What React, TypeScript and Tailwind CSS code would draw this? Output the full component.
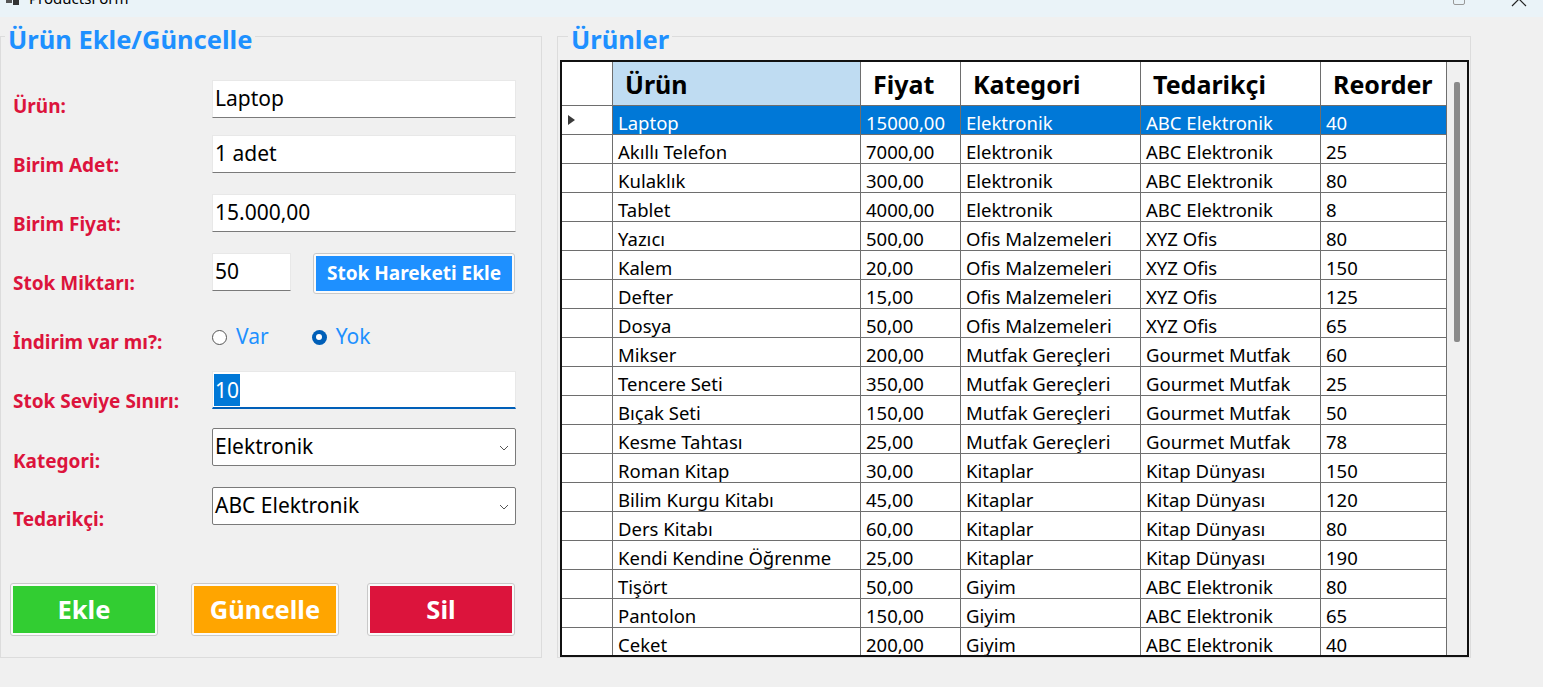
import type { ReactNode } from 'react';

const products = [
  ['Laptop', '15000,00', 'Elektronik', 'ABC Elektronik', '40'],
  ['Akıllı Telefon', '7000,00', 'Elektronik', 'ABC Elektronik', '25'],
  ['Kulaklık', '300,00', 'Elektronik', 'ABC Elektronik', '80'],
  ['Tablet', '4000,00', 'Elektronik', 'ABC Elektronik', '8'],
  ['Yazıcı', '500,00', 'Ofis Malzemeleri', 'XYZ Ofis', '80'],
  ['Kalem', '20,00', 'Ofis Malzemeleri', 'XYZ Ofis', '150'],
  ['Defter', '15,00', 'Ofis Malzemeleri', 'XYZ Ofis', '125'],
  ['Dosya', '50,00', 'Ofis Malzemeleri', 'XYZ Ofis', '65'],
  ['Mikser', '200,00', 'Mutfak Gereçleri', 'Gourmet Mutfak', '60'],
  ['Tencere Seti', '350,00', 'Mutfak Gereçleri', 'Gourmet Mutfak', '25'],
  ['Bıçak Seti', '150,00', 'Mutfak Gereçleri', 'Gourmet Mutfak', '50'],
  ['Kesme Tahtası', '25,00', 'Mutfak Gereçleri', 'Gourmet Mutfak', '78'],
  ['Roman Kitap', '30,00', 'Kitaplar', 'Kitap Dünyası', '150'],
  ['Bilim Kurgu Kitabı', '45,00', 'Kitaplar', 'Kitap Dünyası', '120'],
  ['Ders Kitabı', '60,00', 'Kitaplar', 'Kitap Dünyası', '80'],
  ['Kendi Kendine Öğrenme', '25,00', 'Kitaplar', 'Kitap Dünyası', '190'],
  ['Tişört', '50,00', 'Giyim', 'ABC Elektronik', '80'],
  ['Pantolon', '150,00', 'Giyim', 'ABC Elektronik', '65'],
  ['Ceket', '200,00', 'Giyim', 'ABC Elektronik', '40'],
];

const headers = ['Ürün', 'Fiyat', 'Kategori', 'Tedarikçi', 'Reorder'];
const colWidths = ['w-[248px]', 'w-[100px]', 'w-[180px]', 'w-[180px]', 'w-[126px]'];

function Row({ h, lt, label, children }: { h: string; lt: string; label: string; children: ReactNode }) {
  return (
    <div className={`flex shrink-0 ${h}`}>
      <div className={`w-[199px] ${lt} text-[19px] leading-[22px] font-bold text-[#dc143c] whitespace-nowrap`}>{label}</div>
      {children}
    </div>
  );
}

function TextBox({ value, w = 'w-[304px]' }: { value: string; w?: string }) {
  return (
    <div className={`${w} h-[38px] bg-white border border-[#e8e8e8] border-b-[#7a7a7a] flex items-center pl-[2px] text-[21px] text-black`}>
      {value}
    </div>
  );
}

function Combo({ value }: { value: string }) {
  return (
    <div className="w-[304px] h-[38px] bg-white border border-[#7a7a7a] rounded-[2px] flex items-center justify-between pl-[2px] pr-[6px] text-[21px] text-black">
      <span>{value}</span>
      <svg width="10" height="6" viewBox="0 0 10 6" className="mt-[2px]">
        <polyline points="1,1 5,5 9,1" fill="none" stroke="#555" strokeWidth="1" />
      </svg>
    </div>
  );
}

function ColorButton({ text, bg, size }: { text: string; bg: string; size: string }) {
  return (
    <div className="h-full border border-[#c9c9c9] rounded-[3px] bg-[#fafafa] p-[2px]">
      <div className={`h-full w-full ${bg} flex items-center justify-center text-white font-bold ${size}`}>{text}</div>
    </div>
  );
}

export default function App() {
  return (
    <div className="w-[1543px] h-[687px] bg-[#f0f0f0] overflow-hidden flex flex-col font-['Noto_Sans',sans-serif]">
      {/* Title bar (cut off at top) */}
      <div className="h-[17px] shrink-0 bg-[#eaf3f8] flex items-start overflow-hidden">
        <svg width="14" height="8" viewBox="0 0 14 8" className="ml-[6px] mt-[-2px]">
          <rect x="0" y="0" width="6" height="5" fill="#555" />
          <rect x="7" y="0" width="6" height="7" fill="#333" />
        </svg>
        <span className="ml-[9px] mt-[-12px] text-[15px] leading-[20px] text-black">ProductsForm</span>
        <div className="flex-1" />
        <div className="w-[12px] h-[12px] mt-[-7px] border border-[#999] rounded-[2px]" />
        <svg width="16" height="16" viewBox="0 0 16 16" className="ml-[46px] mr-[16px] mt-[-9px]">
          <path d="M1 1 L15 15 M15 1 L1 15" stroke="#222" strokeWidth="1.2" />
        </svg>
      </div>

      <div className="flex pt-[19px]">
        {/* Left group box */}
        <div className="relative w-[542px] h-[622px] border border-[#dcdcdc] shrink-0">
          <div className="absolute left-[4px] top-[-13px] px-[3px] bg-[#f0f0f0] text-[25.5px] leading-[30px] font-bold text-[#1e90ff]">
            Ürün Ekle/Güncelle
          </div>
          <div className="flex flex-col pl-[12px] pt-[43px]">
            <Row h="h-[55px]" lt="mt-[15px]" label="Ürün:">
              <TextBox value="Laptop" />
            </Row>
            <Row h="h-[59px]" lt="mt-[19px]" label="Birim Adet:">
              <TextBox value="1 adet" />
            </Row>
            <Row h="h-[59px]" lt="mt-[19px]" label="Birim Fiyat:">
              <TextBox value="15.000,00" />
            </Row>
            <Row h="h-[73px]" lt="mt-[19px]" label="Stok Miktarı:">
              <TextBox value="50" w="w-[79px]" />
              <div className="ml-[22px] w-[202px] h-[41px]">
                <ColorButton text="Stok Hareketi Ekle" bg="bg-[#1e90ff]" size="text-[19px]" />
              </div>
            </Row>
            <Row h="h-[45px]" lt="mt-[5px]" label="İndirim var mı?:">
              <div className="flex items-center h-[22px] text-[21px] text-[#1e90ff]">
                <span className="w-[15px] h-[15px] rounded-full border border-[#555] bg-white" />
                <span className="ml-[9px]">Var</span>
                <span className="ml-[43px] w-[15px] h-[15px] rounded-full bg-[#005fb8] flex items-center justify-center">
                  <span className="w-[6px] h-[6px] rounded-full bg-white" />
                </span>
                <span className="ml-[9px]">Yok</span>
              </div>
            </Row>
            <Row h="h-[57px]" lt="mt-[19px]" label="Stok Seviye Sınırı:">
              <div className="w-[304px] h-[38px] bg-white border border-[#e8e8e8] border-b-2 border-b-[#005fb8] flex items-center pl-[1px] text-[21px]">
                <span className="bg-[#0078d7] text-white leading-[32px] px-[1px]">10</span>
              </div>
            </Row>
            <Row h="h-[59px]" lt="mt-[22px]" label="Kategori:">
              <Combo value="Elektronik" />
            </Row>
            <Row h="h-[96px]" lt="mt-[21px]" label="Tedarikçi:">
              <Combo value="ABC Elektronik" />
            </Row>
            <div className="flex h-[53px] -ml-[3px]">
              <div className="w-[148px]">
                <ColorButton text="Ekle" bg="bg-[#32cd32]" size="text-[25.5px]" />
              </div>
              <div className="w-[148px] ml-[33px]">
                <ColorButton text="Güncelle" bg="bg-[#ffa500]" size="text-[25.5px]" />
              </div>
              <div className="w-[148px] ml-[28px]">
                <ColorButton text="Sil" bg="bg-[#dc143c]" size="text-[25.5px]" />
              </div>
            </div>
          </div>
        </div>

        {/* Right group box */}
        <div className="relative ml-[15px] w-[914px] h-[622px] border border-[#dcdcdc] shrink-0">
          <div className="absolute left-[10px] top-[-13px] px-[3px] bg-[#f0f0f0] text-[25.5px] leading-[30px] font-bold text-[#1e90ff]">
            Ürünler
          </div>
          <div className="ml-[2px] mt-[23px] w-[909px] h-[597px] border-2 border-[#111] bg-white flex overflow-hidden">
            <div className="flex flex-col">
              {/* Header */}
              <div className="flex h-[44px] shrink-0 border-b border-[#6e6e6e]">
                <div className="w-[51px] shrink-0 border-r border-[#6e6e6e] bg-white" />
                {headers.map((h, i) => (
                  <div
                    key={h}
                    className={`${colWidths[i]} shrink-0 border-r border-[#6e6e6e] flex items-center pl-[12px] pt-[2px] text-[25px] font-bold text-black ${i === 0 ? 'bg-[#bfdcf2]' : 'bg-white'}`}
                  >
                    {h}
                  </div>
                ))}
              </div>
              {/* Rows */}
              {products.map((p, r) => {
                const sel = r === 0;
                return (
                  <div key={p[0]} className="flex h-[29px] shrink-0 border-b border-[#6e6e6e]">
                    <div className="w-[51px] shrink-0 border-r border-[#6e6e6e] bg-white flex items-center pl-[6px]">
                      {sel && (
                        <svg width="7" height="10" viewBox="0 0 7 10">
                          <polygon points="0,0 7,5 0,10" fill="#3a3a3a" />
                        </svg>
                      )}
                    </div>
                    {p.map((v, i) => (
                      <div
                        key={i}
                        className={`${colWidths[i]} shrink-0 border-r border-[#6e6e6e] pl-[5px] pt-[4px] text-[18.5px] leading-[25px] whitespace-nowrap overflow-hidden ${sel ? 'bg-[#0078d7] text-white' : 'bg-white text-black'}`}
                      >
                        {v}
                      </div>
                    ))}
                  </div>
                );
              })}
            </div>
            {/* Scrollbar */}
            <div className="w-[20px] shrink-0 bg-[#f0f0f0]">
              <div className="ml-[7px] mt-[20px] w-[6px] h-[260px] bg-[#8a8a8a] rounded-[2px]" />
            </div>
          </div>
        </div>
      </div>
    </div>
  );
}
